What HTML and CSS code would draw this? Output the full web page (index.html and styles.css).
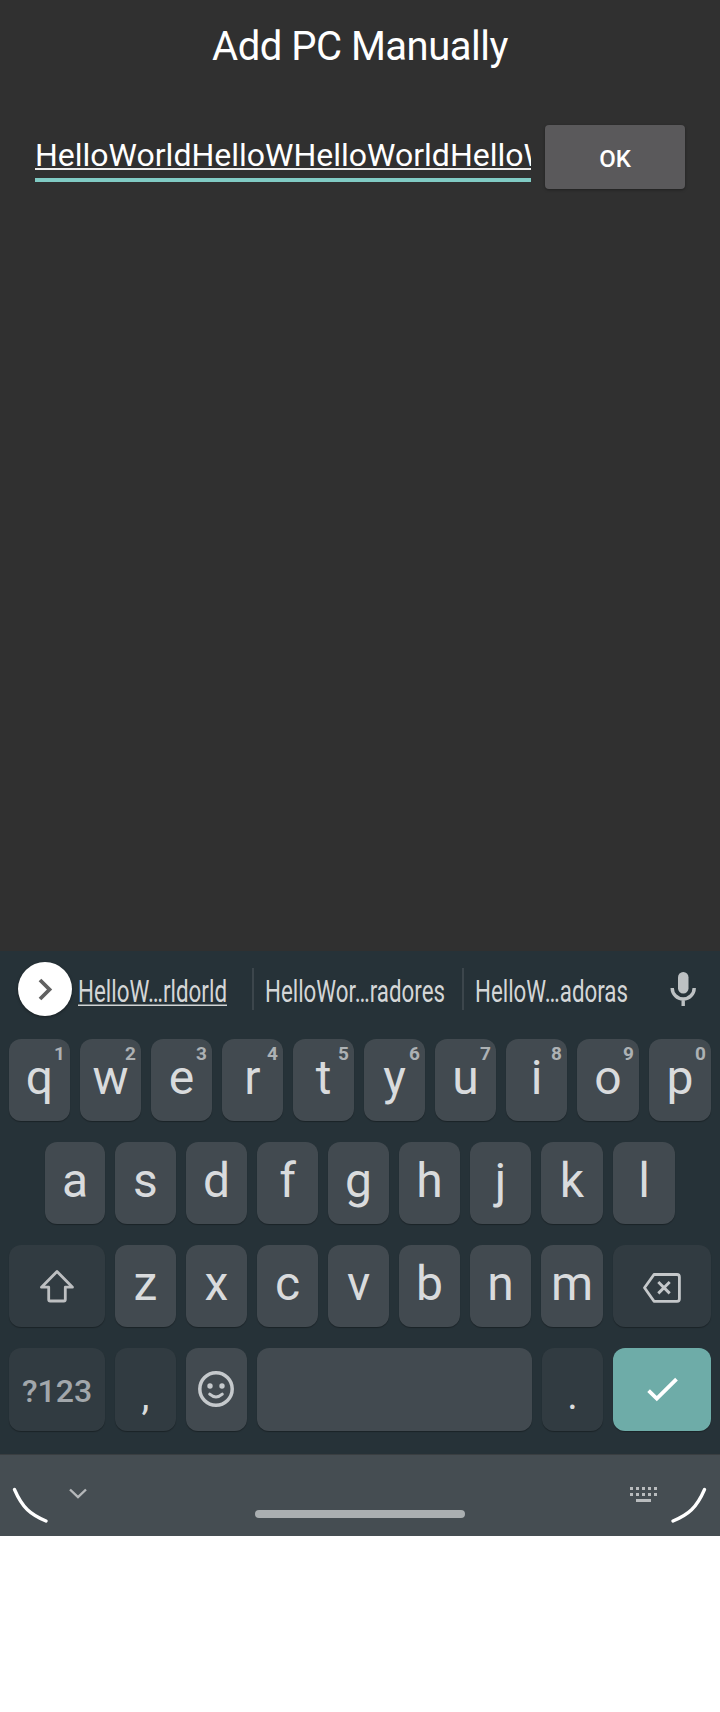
FILE: index.html
```
<!DOCTYPE html>
<html lang="en">
<head>
<meta charset="utf-8">
<title>Add PC Manually</title>
<link rel="stylesheet" href="styles.css">
</head>
<body>
<main class="screen">
  <section class="dialog">
    <h1 class="title">Add PC Manually</h1>
    <div class="form">
      <div class="field"><span class="value">HelloWorldHelloWHelloWorldHelloWorld</span></div>
      <button class="ok">OK</button>
    </div>
  </section>

  <section class="keyboard">
    <div class="strip">
      <div class="more">
        <svg width="54" height="54" viewBox="0 0 54 54"><path d="M22 18l9.500 9.500-9.500 9.500" fill="none" stroke="#616161" stroke-width="3.800"/></svg>
      </div>
      <svg class="suggestion first" width="149" height="44"><text x="0" y="33" textLength="149" lengthAdjust="spacingAndGlyphs">HelloW…rldorld</text><path d="M0 36.200H149" stroke="#d0d3d4" stroke-width="1.600"/></svg>
      <i class="divider"></i>
      <svg class="suggestion second" width="180" height="44"><text x="0" y="33" textLength="180" lengthAdjust="spacingAndGlyphs">HelloWor…radores</text></svg>
      <i class="divider"></i>
      <svg class="suggestion third" width="154" height="44"><text x="0" y="33" textLength="153" lengthAdjust="spacingAndGlyphs">HelloW…adoras</text></svg>
      <svg class="mic" width="26" height="36" viewBox="0 0 26 36"><rect x="8" y="1" width="10.500" height="21.500" rx="5.200" fill="#bdc1c3"/><path d="M2.200 17a11 11 0 0 0 22 0M13.200 28v7" fill="none" stroke="#bdc1c3" stroke-width="3.400"/></svg>
    </div>

    <div class="row top">
      <div class="key">q<sup>1</sup></div><div class="key">w<sup>2</sup></div><div class="key">e<sup>3</sup></div><div class="key">r<sup>4</sup></div><div class="key">t<sup>5</sup></div><div class="key">y<sup>6</sup></div><div class="key">u<sup>7</sup></div><div class="key">i<sup>8</sup></div><div class="key wider">o<sup>9</sup></div><div class="key wider">p<sup>0</sup></div>
    </div>
    <div class="row home">
      <div class="key narrow">a</div><div class="key">s</div><div class="key">d</div><div class="key">f</div><div class="key">g</div><div class="key">h</div><div class="key">j</div><div class="key wider">k</div><div class="key wider">l</div>
    </div>
    <div class="row">
      <div class="key dark shift"><svg width="96" height="82" viewBox="0 0 96 82"><path d="M48 26.500L32.500 42.200H39.700V54.500Q39.700 56 41.200 56H54.800Q56.300 56 56.300 54.500V42.200H63.500Z" fill="none" stroke="#bdbfc1" stroke-width="2.800" stroke-linejoin="round"/></svg></div>
      <div class="key">z</div><div class="key">x</div><div class="key">c</div><div class="key">v</div><div class="key">b</div><div class="key">n</div><div class="key wider">m</div>
      <div class="key dark action"><svg width="98" height="82" viewBox="0 0 98 82"><path d="M41 29.500H64Q66.400 29.500 66.400 32V54Q66.400 56.300 64 56.300H41L31.500 42.800Z" fill="none" stroke="#c5c8ca" stroke-width="2.800" stroke-linejoin="round"/><path d="M45.300 37l11.400 11.400M56.700 37L45.300 48.400" stroke="#c5c8ca" stroke-width="2.900"/></svg></div>
    </div>
    <div class="row bottom">
      <div class="key dark shift symbols">?123</div>
      <div class="key dark punct">,</div>
      <div class="key"><svg width="61" height="83" viewBox="0 0 61 83"><circle cx="30" cy="41" r="16.200" fill="none" stroke="#c5c9cc" stroke-width="3.500"/><circle cx="24" cy="38" r="2.700" fill="#c5c9cc"/><circle cx="36" cy="38" r="2.700" fill="#c5c9cc"/><path d="M23.700 46.200Q30 51.800 36.300 46.200" fill="none" stroke="#c5c9cc" stroke-width="3" stroke-linecap="round"/></svg></div>
      <div class="key space"></div>
      <div class="key dark punct">.</div>
      <div class="key action enter"><svg width="98" height="83" viewBox="0 0 98 83"><path d="M35.600 42.700L43.800 50.700L63.500 31.200" fill="none" stroke="#fff" stroke-width="3.800"/></svg></div>
    </div>

    <footer class="nav">
      <svg class="corner-left" width="36" height="36" viewBox="0 0 36 36"><path d="M2.500 2.500C10.500 21 18.500 27.500 34 34" fill="none" stroke="#fff" stroke-width="3.300" stroke-linecap="round"/></svg>
      <svg class="down" width="20" height="14" viewBox="0 0 20 14"><path d="M2 2.500l8 7.700 8-7.700" fill="none" stroke="#b5b8ba" stroke-width="2.400"/></svg>
      <i class="handle"></i>
      <svg class="switcher" width="27" height="16" viewBox="0 0 27 16" fill="#b9bcbe"><path d="M0 0h3v3H0zM6 0h3v3H6zM12 0h3v3h-3zM18 0h3v3h-3zM24 0h3v3h-3zM0 6h3v3H0zM6 6h3v3H6zM12 6h3v3h-3zM18 6h3v3h-3zM24 6h3v3h-3zM6 12h15v3H6z"/></svg>
      <svg class="corner-right" width="36" height="36" viewBox="0 0 36 36"><path d="M33.500 2.500C25.500 21 17.500 27.500 2 34" fill="none" stroke="#fff" stroke-width="3.300" stroke-linecap="round"/></svg>
    </footer>
  </section>
</main>
</body>
</html>
```

FILE: styles.css
```
* { box-sizing: border-box; }
body { margin: 0; background: #fff; font-family: Roboto, "Liberation Sans", sans-serif; }
svg { display: block; flex: none; }
.screen { width: 720px; height: 1536px; background: #303030; display: flex; flex-direction: column; }

.dialog { height: 951px; padding: 23px 35px 0; color: #fff; }
.title { margin: 0; font-size: 40px; line-height: 48px; font-weight: 400; text-align: center; letter-spacing: -.5px; }
.form { display: flex; gap: 14px; margin-top: 54px; }
.field { width: 496px; height: 57px; padding-top: 11px; overflow: hidden; border-bottom: 4px solid #80cbc4; }
.value { display: block; height: 34px; font-size: 32px; line-height: 38px; white-space: nowrap; border-bottom: 2px solid #eee; }
.ok { width: 140px; height: 64px; padding: 3px 0 0; border: 0; border-radius: 4px; background: #5a595b; color: #fff; font: 500 24px Roboto, sans-serif; box-shadow: 0 1px 3px rgba(0,0,0,.35); }

.keyboard { height: 585px; background: #263238; }
.strip { display: flex; align-items: flex-start; height: 88px; padding: 11px 0 0 18px; }
.more { width: 54px; height: 54px; border-radius: 50%; background: #fff; box-shadow: 0 1px 3px rgba(0,0,0,.4); }
.suggestion { margin-top: 7px; font-size: 32px; fill: #d4d6d7; }
.first { margin-left: 6px; }
.second { margin-left: 11px; }
.third { margin-left: 11px; }
.divider { width: 2px; height: 42px; margin-top: 6px; background: #3c464c; }
.first + .divider { margin-left: 25px; }
.second + .divider { margin-left: 17px; }
.mic { margin: 9px 0 0 41px; }

.row { display: flex; gap: 10px; height: 82px; margin: 0 9px 21px; }
.home { margin-left: 45px; }
.key { position: relative; flex: none; width: 61px; border-radius: 12px; background: #424a50; color: #d9dbdd; font-size: 48px; line-height: 78px; text-align: center; box-shadow: 0 1px 1px rgba(0,0,0,.3); }
.key sup { position: absolute; right: 5px; top: 3px; font-size: 19px; line-height: 24px; font-weight: 700; color: #adb1b4; }
.wider { width: 62px; }
.narrow { width: 60px; }
.dark { background: #313b41; }
.shift { width: 96px; }
.action { width: 98px; }
.bottom { height: 83px; margin-bottom: 0; }
.symbols { font-size: 32px; font-weight: 500; line-height: 86px; color: #a2a7ab; }
.punct { font-size: 40px; line-height: 95px; }
.space { width: 275px; }
.enter { background: #6eaca8; }

.nav { display: flex; align-items: flex-start; height: 82px; margin-top: 23px; padding-left: 12px; background: #454d52; border-top: 1px solid #393e41; }
.corner-left { margin-top: 32px; }
.down { margin: 32px 0 0 19.500px; }
.handle { width: 210px; height: 8px; margin: 55px 0 0 167.500px; border-radius: 4px; background: #aaafb1; }
.switcher { margin: 32px 0 0 165px; }
.corner-right { margin: 32px 0 0 14px; }
```
